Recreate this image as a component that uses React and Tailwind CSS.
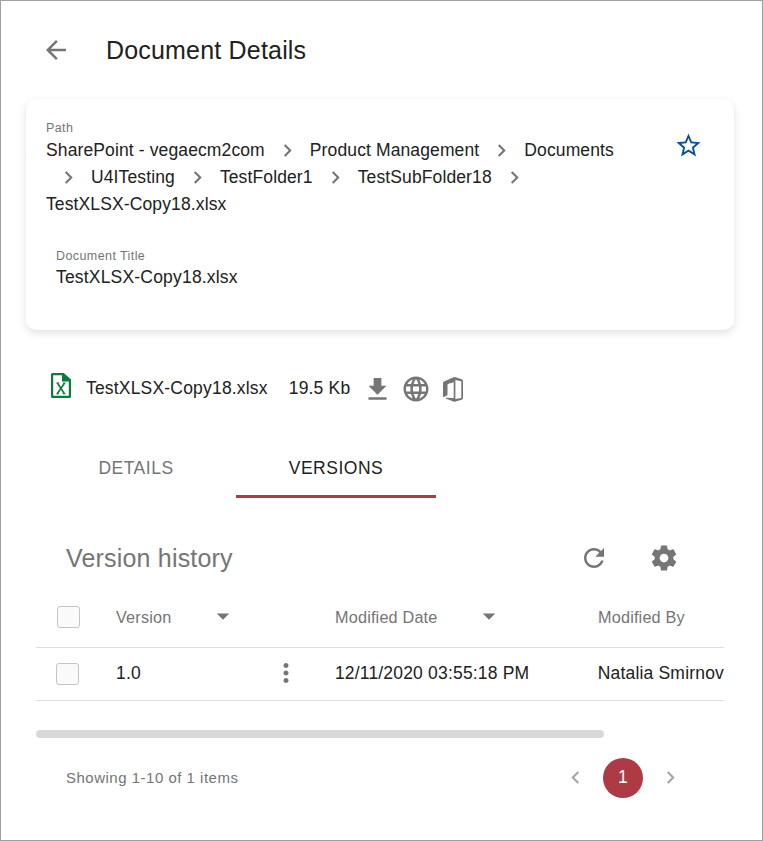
import React from "react";

const Icon = ({ d, className }) => (
  <svg viewBox="0 0 24 24" fill="currentColor" className={`shrink-0 ${className}`}>
    <path d={d} />
  </svg>
);

const paths = {
  back: "M20 11H7.83l5.59-5.59L12 4l-8 8 8 8 1.41-1.41L7.83 13H20v-2z",
  right: "M10 6L8.59 7.41 13.17 12l-4.58 4.59L10 18l6-6z",
  left: "M15.41 7.41L14 6l-6 6 6 6 1.41-1.41L10.83 12z",
  star: "M22 9.24l-7.19-.62L12 2 9.19 8.63 2 9.24l5.46 4.73L5.82 21 12 17.27 18.18 21l-1.63-7.03L22 9.24zM12 15.4l-3.76 2.27 1-4.28-3.32-2.88 4.38-.38L12 6.1l1.71 4.04 4.38.38-3.32 2.88 1 4.28L12 15.4z",
  download: "M19 9h-4V3H9v6H5l7 7 7-7zM5 18v2h14v-2H5z",
  globe:
    "M11.99 2C6.47 2 2 6.48 2 12s4.47 10 9.99 10C17.52 22 22 17.52 22 12S17.52 2 11.99 2zm6.93 6h-2.95c-.32-1.25-.78-2.45-1.38-3.56 1.84.63 3.37 1.91 4.33 3.56zM12 4.04c.83 1.2 1.48 2.53 1.91 3.96h-3.82c.43-1.43 1.08-2.76 1.91-3.96zM4.26 14C4.1 13.36 4 12.69 4 12s.1-1.36.26-2h3.38c-.08.66-.14 1.32-.14 2s.06 1.34.14 2H4.26zm.82 2h2.95c.32 1.25.78 2.45 1.38 3.56-1.84-.63-3.37-1.9-4.33-3.56zm2.95-8H5.08c.96-1.66 2.49-2.93 4.33-3.56C8.81 5.55 8.35 6.75 8.03 8zM12 19.96c-.83-1.2-1.48-2.53-1.91-3.96h3.82c-.43 1.43-1.08 2.76-1.91 3.96zM14.34 14H9.66c-.09-.66-.16-1.32-.16-2s.07-1.35.16-2h4.68c.09.65.16 1.32.16 2s-.07 1.34-.16 2zm.25 5.56c.6-1.11 1.06-2.31 1.38-3.56h2.95c-.96 1.65-2.49 2.93-4.33 3.56zM16.36 14c.08-.66.14-1.32.14-2s-.06-1.34-.14-2h3.38c.16.64.26 1.31.26 2s-.1 1.36-.26 2h-3.38z",
  refresh:
    "M17.65 6.35C16.2 4.9 14.21 4 12 4c-4.42 0-7.99 3.58-7.99 8s3.57 8 7.99 8c3.73 0 6.84-2.55 7.73-6h-2.08c-.82 2.33-3.04 4-5.65 4-3.31 0-6-2.69-6-6s2.69-6 6-6c1.66 0 3.14.69 4.22 1.78L13 11h7V4l-2.35 2.35z",
  gear: "M19.43 12.98c.04-.32.07-.64.07-.98s-.03-.66-.07-.98l2.11-1.65c.19-.15.24-.42.12-.64l-2-3.46c-.12-.22-.39-.3-.61-.22l-2.49 1c-.52-.4-1.08-.73-1.69-.98l-.38-2.65C14.46 2.180 14.25 2 14 2h-4c-.25 0-.46.18-.49.42l-.38 2.65c-.61.25-1.17.59-1.69.98l-2.49-1c-.23-.09-.49 0-.61.22l-2 3.46c-.13.22-.07.49.12.64l2.110 1.650c-.04.32-.07.65-.07.98s.03.66.07.98l-2.110 1.650c-.19.15-.24.42-.12.64l2 3.460c.12.22.39.3.61.22l2.490-1c.52.4 1.080.73 1.690.98l.38 2.650c.03.24.24.42.49.42h4c.25 0 .46-.18.49-.42l.38-2.650c.61-.25 1.170-.59 1.690-.98l2.490 1c.23.09.49 0 .61-.22l2-3.460c.12-.22.07-.49-.12-.64l-2.110-1.650zM12 15.500c-1.930 0-3.500-1.570-3.500-3.500s1.570-3.500 3.500-3.500 3.500 1.570 3.500 3.500-1.570 3.500-3.500 3.500z",
  caret: "M7 10l5 5 5-5z",
  dots: "M12 8c1.1 0 2-.9 2-2s-.9-2-2-2-2 .9-2 2 .9 2 2 2zm0 2c-1.1 0-2 .9-2 2s.9 2 2 2 2-.9 2-2-.9-2-2-2zm0 6c-1.1 0-2 .9-2 2s.9 2 2 2 2-.9 2-2-.9-2-2-2z",
};

const Separator = () => <Icon d={paths.right} className="mx-[10px] size-[25px] text-[#757575]" />;

const ExcelIcon = () => (
  <svg viewBox="0 0 20 25" className="mb-[6px] h-[25px] w-[20px] shrink-0">
    <path
      fillRule="evenodd"
      fill="#0a7d38"
      d="M1.500 0H12.800L20 6.600V23.500a1.500 1.500 0 0 1-1.500 1.500H1.500a1.500 1.500 0 0 1-1.500-1.500V1.500a1.500 1.500 0 0 1 1.500-1.500zM2.200 2.200V22.800H17.800V8.500H11V2.200z"
    />
    <path d="M6.400 10L13.400 20.800M13.600 10L6.200 20.800" stroke="#0a7d38" strokeWidth="1.600" fill="none" />
    <path d="M5.200 10h3.200M11.800 10h2.800M5.200 20.800h2.800M11.600 20.800h3.200" stroke="#0a7d38" strokeWidth="0.900" />
  </svg>
);

const OfficeIcon = () => (
  <svg viewBox="0 0 20 25" className="h-[25px] w-[20px] shrink-0">
    <path
      fillRule="evenodd"
      fill="#757575"
      d="M0 6.200Q0 5 1 4.400L10.500 .2Q11.500 -.1 12.500 .3L18.800 2.300Q20 2.800 20 4V21Q20 22.300 18.800 22.700L12.500 24.600Q11.500 25 10.500 24.600L3.200 21.700Q2.500 20.900 3.500 20.800L10.700 21V5.300L5.500 6.800Q4.500 7.100 4.500 8V17.500Q4.500 18.200 3.800 18.500L1 19.900Q0 20.200 0 19.200zM12.400 3V21.900L18.300 20.900V4.200z"
    />
  </svg>
);

const Checkbox = ({ className }) => (
  <span className={`h-[22px] w-[23px] rounded-[3px] border border-[#c4c4c4] bg-[#fafafa] ${className}`} />
);

export default function App() {
  return (
    <div className="flex h-[841px] w-[763px] flex-col border border-[#a0a0a0] bg-white font-['Liberation_Sans',Arial,sans-serif] text-[17.5px] leading-[25px] tracking-[0.187px] text-[#212121]">
      <header className="flex h-[98px] items-center pl-[40px]">
        <Icon d={paths.back} className="size-[30px] text-[#757575]" />
        <h1 className="ml-[35px] text-[25px] leading-10 tracking-[0.1875px]">Document Details</h1>
      </header>

      <section className="ml-[25px] flex h-[231px] w-[708px] justify-between rounded-[10px] px-5 pt-[21px] shadow-[0_3px_8px_rgba(0,0,0,0.12)]">
        <div className="flex flex-col whitespace-nowrap">
          <div className="h-[17px] text-[12.5px] leading-[17px] tracking-[0.417px] text-[#757575]">Path</div>
          <div className="flex h-[27px] items-center tracking-[0.12px]">
            SharePoint - vegaecm2com
            <Separator />
            Product Management
            <Separator />
            Documents
          </div>
          <div className="flex h-[27px] items-center tracking-[0.12px]">
            <Separator />
            U4ITesting
            <Separator />
            TestFolder1
            <Separator />
            TestSubFolder18
            <Separator />
          </div>
          <div className="flex h-[27px] items-center tracking-[0.12px]">TestXLSX-Copy18.xlsx</div>
          <div className="mt-[30px] pl-[10px]">
            <div className="h-[17px] text-[12.5px] leading-[17px] tracking-[0.417px] text-[#757575]">Document Title</div>
            <div>TestXLSX-Copy18.xlsx</div>
          </div>
        </div>
        <Icon d={paths.star} className="mt-[11px] mr-[11px] size-[29px] text-[#0b5394]" />
      </section>

      <div className="mt-[42px] flex h-[32px] items-center pl-[50px]">
        <ExcelIcon />
        <span className="ml-[15px]">TestXLSX-Copy18.xlsx</span>
        <span className="ml-[21px]">19.5 Kb</span>
        <div className="ml-[12px] flex items-center pt-[2px] text-[#757575]">
          <Icon d={paths.download} className="size-[31px]" />
          <Icon d={paths.globe} className="ml-[8px] size-[30px]" />
          <span className="ml-[12px] flex">
            <OfficeIcon />
          </span>
        </div>
      </div>

      <nav className="mt-[34px] ml-[35px] flex h-[60px] text-center tracking-[0.5px]">
        <div className="w-[200px] pt-[18px] text-[#757575]">DETAILS</div>
        <div className="w-[200px] border-b-[3px] border-[#ae3a46] pt-[18px]">VERSIONS</div>
      </nav>

      <div className="mt-[40px] flex h-10 items-center pl-[65px] text-[#757575]">
        <h2 className="w-[516px] text-[25px] tracking-[0.1875px]">Version history</h2>
        <Icon d={paths.refresh} className="-ml-[3px] size-[30px]" />
        <Icon d={paths.gear} className="ml-[40px] size-[30px]" />
      </div>

      <div className="mt-[9px] ml-[35px] w-[688px] overflow-hidden whitespace-nowrap">
        <div className="flex h-[61px] items-center border-b border-[#dedede] text-[16.25px] tracking-[0.174px] text-[#757575]">
          <Checkbox className="ml-[21px]" />
          <span className="ml-[36px] w-[92px]">Version</span>
          <Icon d={paths.caret} className="mr-[97px] mb-[2px] size-[30px]" />
          <span className="w-[139px]">Modified Date</span>
          <Icon d={paths.caret} className="mr-[94px] mb-[2px] size-[30px]" />
          <span>Modified By</span>
        </div>
        <div className="flex h-[53px] items-center border-b border-[#dedede]">
          <Checkbox className="ml-[20px]" />
          <span className="mb-[2px] ml-[37px] w-[155px]">1.0</span>
          <Icon d={paths.dots} className="mr-[34px] mb-[2px] size-[30px] text-[#757575]" />
          <span className="mb-[2px] w-[263px]">12/11/2020 03:55:18 PM</span>
          <span className="mb-[2px]">Natalia Smirnov</span>
        </div>
      </div>

      <div className="mt-[29px] ml-[35px] h-2 w-[568px] shrink-0 rounded-full bg-[#d8d8d8]" />

      <footer className="mt-[20px] flex h-10 items-center pl-[65px]">
        <span className="mb-[2px] w-[497px] text-[15px] tracking-[0.5px] text-[#757575]">Showing 1-10 of 1 items</span>
        <Icon d={paths.left} className="mb-px size-[25px] text-[#a6a6a6]" />
        <span className="ml-[15px] flex size-10 items-center justify-center rounded-full bg-[#ae3a46] pb-[2px] text-white">1</span>
        <Icon d={paths.right} className="mb-px ml-[15px] size-[25px] text-[#a6a6a6]" />
      </footer>
    </div>
  );
}
